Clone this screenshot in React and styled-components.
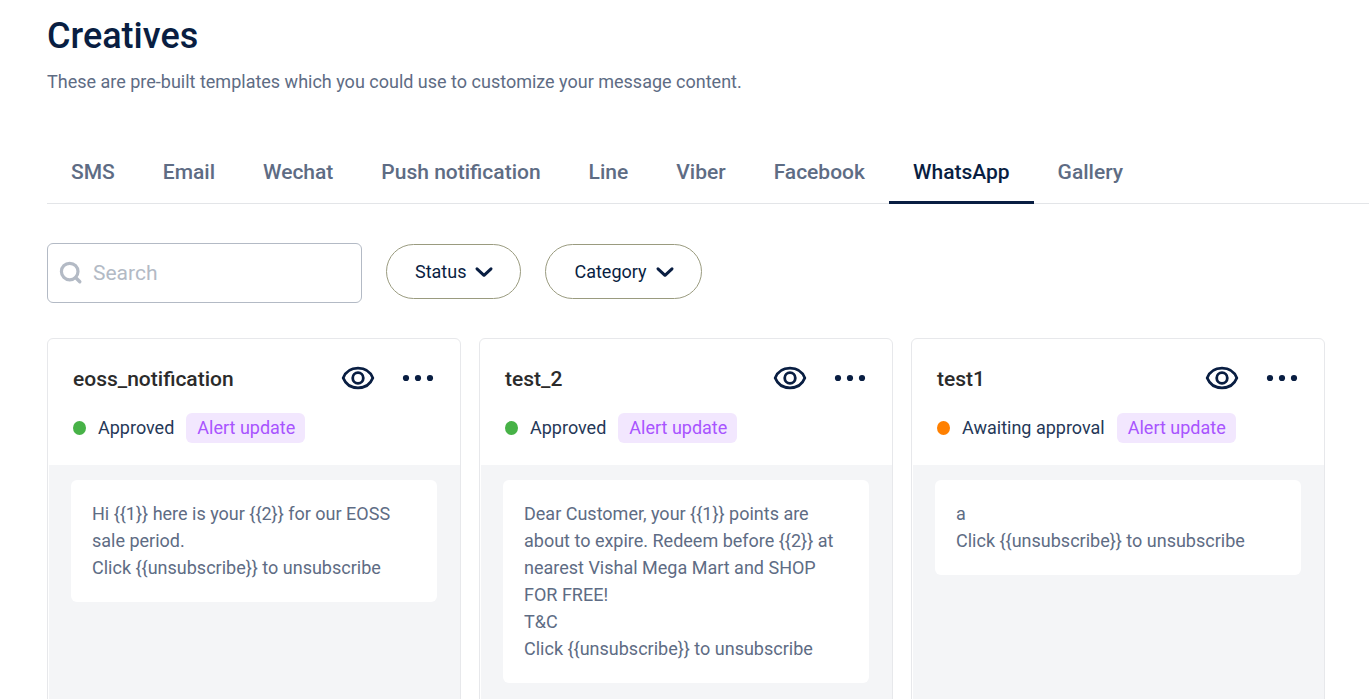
import React, { useState } from "react";
import styled, { createGlobalStyle } from "styled-components";

const navy = "#091e42";
const slate = "#5e6c84";

const GlobalStyle = createGlobalStyle`
  *, *::before, *::after { box-sizing: border-box; }
  body {
    margin: 0;
    background: #fff;
    color: ${navy};
    font-family: Roboto, "Liberation Sans", sans-serif;
    font-size: 18px;
    line-height: 27px;
  }
  button, input { font: inherit; color: inherit; }
`;

const Page = styled.main`
  padding: 12px 0 0 47px;
`;

const Title = styled.h1`
  margin: 0;
  font-size: 36px;
  line-height: 48px;
  font-weight: 500;
`;

const Description = styled.p`
  margin: 8px 0 0;
  color: ${slate};
`;

const Tabs = styled.nav`
  display: flex;
  margin-top: 45px;
  border-bottom: 1px solid #e3e5e8;
`;

const Tab = styled.a`
  padding: 17px 24px 14px;
  margin-bottom: -1px;
  font-size: 21px;
  line-height: 30px;
  font-weight: 500;
  text-decoration: none;
  white-space: nowrap;
  color: ${(p) => (p.$active ? navy : slate)};
  border-bottom: 3px solid ${(p) => (p.$active ? navy : "transparent")};
`;

const Filters = styled.div`
  display: flex;
  flex-wrap: wrap;
  gap: 24px;
  margin-top: 39px;
`;

const SearchBox = styled.label`
  display: flex;
  align-items: center;
  gap: 10px;
  width: 315px;
  height: 60px;
  padding: 0 11px;
  border: 1px solid #b3bac5;
  border-radius: 6px;
  color: #b3bac5;
`;

const SearchInput = styled.input`
  flex: 1;
  min-width: 0;
  padding: 0;
  border: 0;
  outline: 0;
  background: none;
  font-size: 21px;
  color: ${navy};
  &::placeholder { color: #b3bac5; opacity: 1; }
`;

const FilterButton = styled.button`
  display: flex;
  align-items: center;
  gap: 8px;
  height: 55px;
  margin-top: 1px;
  padding: 0 26px 0 28px;
  border: 1px solid #9a9b7f;
  border-radius: 28px;
  background: #fff;
  cursor: pointer;
`;

const CardGrid = styled.div`
  display: grid;
  grid-template-columns: repeat(3, minmax(0, 1fr));
  gap: 18px;
  margin: 35px 44px 0 0;
`;

const Card = styled.article`
  display: flex;
  flex-direction: column;
  min-height: 480px;
  padding-left: 1px;
  border: 1px solid #e7e8eb;
  border-radius: 6px;
  overflow: hidden;
`;

const CardHeader = styled.header`
  padding: 23px 24px 22px;
`;

const NameRow = styled.div`
  display: flex;
  align-items: center;
  height: 32px;
`;

const CardName = styled.h2`
  flex: 1;
  margin: 0;
  padding-top: 2px;
  font-size: 21px;
  line-height: 32px;
  font-weight: 500;
  color: #2b2b2b;
`;

const IconButton = styled.button`
  display: flex;
  margin-left: 24px;
  padding: 0;
  border: 0;
  background: none;
  cursor: pointer;
`;

const StatusRow = styled.div`
  display: flex;
  align-items: center;
  margin-top: 19px;
  line-height: 30px;
`;

const StatusDot = styled.span`
  width: 13px;
  height: 14px;
  margin-right: 12px;
  border-radius: 50%;
  background: ${(p) => (p.$approved ? "#47b247" : "#ff8000")};
`;

const StatusText = styled.span`
  color: #253858;
`;

const Tag = styled.span`
  margin-left: 12px;
  padding: 0 10px 0 11px;
  border-radius: 6px;
  background: #f2e7fe;
  color: #a854ff;
`;

const CardBody = styled.div`
  flex: 1;
  padding: 15px 23px 24px 22px;
  background: #f4f5f7;
`;

const Message = styled.p`
  margin: 0;
  padding: 20px 20px 21px 21px;
  border-radius: 6px;
  background: #fff;
  color: ${slate};
  white-space: pre-line;
`;

const SearchIcon = () => (
  <svg width="24" height="24" viewBox="0 0 24 24" fill="none" stroke="#b3bac5" aria-hidden="true">
    <circle cx="10.7" cy="10.6" r="8.3" strokeWidth="3.2" />
    <path d="M16.8 16.8L20.8 20.8" strokeWidth="3.4" strokeLinecap="round" />
  </svg>
);

const Chevron = () => (
  <svg width="20" height="16" viewBox="0 0 20 16" fill="none" stroke={navy} strokeWidth="3" strokeLinecap="round" strokeLinejoin="round" aria-hidden="true">
    <path d="M3 4.8L10 11.3L17 4.8" />
  </svg>
);

const EyeIcon = () => (
  <svg width="36" height="30" viewBox="0 0 36 30" fill="none" stroke={navy} strokeWidth="2.8" aria-hidden="true">
    <path d="M3.2 15C5.8 8.4 11.4 5.2 18 5.2S30.2 8.4 32.8 15C30.2 21.6 24.6 24.8 18 24.8S5.8 21.6 3.2 15Z" strokeLinejoin="round" />
    <circle cx="18" cy="15" r="5.3" />
  </svg>
);

const MoreIcon = () => (
  <svg width="36" height="30" viewBox="0 0 36 30" fill={navy} aria-hidden="true">
    <circle cx="6" cy="15" r="3.1" />
    <circle cx="18" cy="15" r="3.1" />
    <circle cx="30" cy="15" r="3.1" />
  </svg>
);

const channels = ["SMS", "Email", "Wechat", "Push notification", "Line", "Viber", "Facebook", "WhatsApp", "Gallery"];

const templates = [
  {
    name: "eoss_notification",
    status: "Approved",
    message: "Hi {{1}} here is your {{2}} for our EOSS sale period.\nClick {{unsubscribe}} to unsubscribe",
  },
  {
    name: "test_2",
    status: "Approved",
    message:
      "Dear Customer, your {{1}} points are about to expire. Redeem before {{2}} at nearest Vishal Mega Mart and SHOP FOR FREE!\nT&C\nClick {{unsubscribe}} to unsubscribe",
  },
  {
    name: "test1",
    status: "Awaiting approval",
    message: "a\nClick {{unsubscribe}} to unsubscribe",
  },
];

function TemplateCard({ name, status, message }) {
  return (
    <Card>
      <CardHeader>
        <NameRow>
          <CardName>{name}</CardName>
          <IconButton type="button" aria-label={`Preview ${name}`}><EyeIcon /></IconButton>
          <IconButton type="button" aria-label={`More actions for ${name}`}><MoreIcon /></IconButton>
        </NameRow>
        <StatusRow>
          <StatusDot $approved={status === "Approved"} />
          <StatusText>{status}</StatusText>
          <Tag>Alert update</Tag>
        </StatusRow>
      </CardHeader>
      <CardBody>
        <Message>{message}</Message>
      </CardBody>
    </Card>
  );
}

export default function App() {
  const [active, setActive] = useState("WhatsApp");
  return (
    <>
      <GlobalStyle />
      <Page>
        <Title>Creatives</Title>
        <Description>These are pre-built templates which you could use to customize your message content.</Description>
        <Tabs aria-label="Channels">
          {channels.map((channel) => (
            <Tab
              key={channel}
              href="#"
              $active={channel === active}
              aria-current={channel === active ? "page" : undefined}
              onClick={(e) => {
                e.preventDefault();
                setActive(channel);
              }}
            >
              {channel}
            </Tab>
          ))}
        </Tabs>
        <Filters>
          <SearchBox>
            <SearchIcon />
            <SearchInput type="search" placeholder="Search" aria-label="Search" />
          </SearchBox>
          <FilterButton type="button">Status <Chevron /></FilterButton>
          <FilterButton type="button">Category <Chevron /></FilterButton>
        </Filters>
        <CardGrid>
          {templates.map((template) => (
            <TemplateCard key={template.name} {...template} />
          ))}
        </CardGrid>
      </Page>
    </>
  );
}
